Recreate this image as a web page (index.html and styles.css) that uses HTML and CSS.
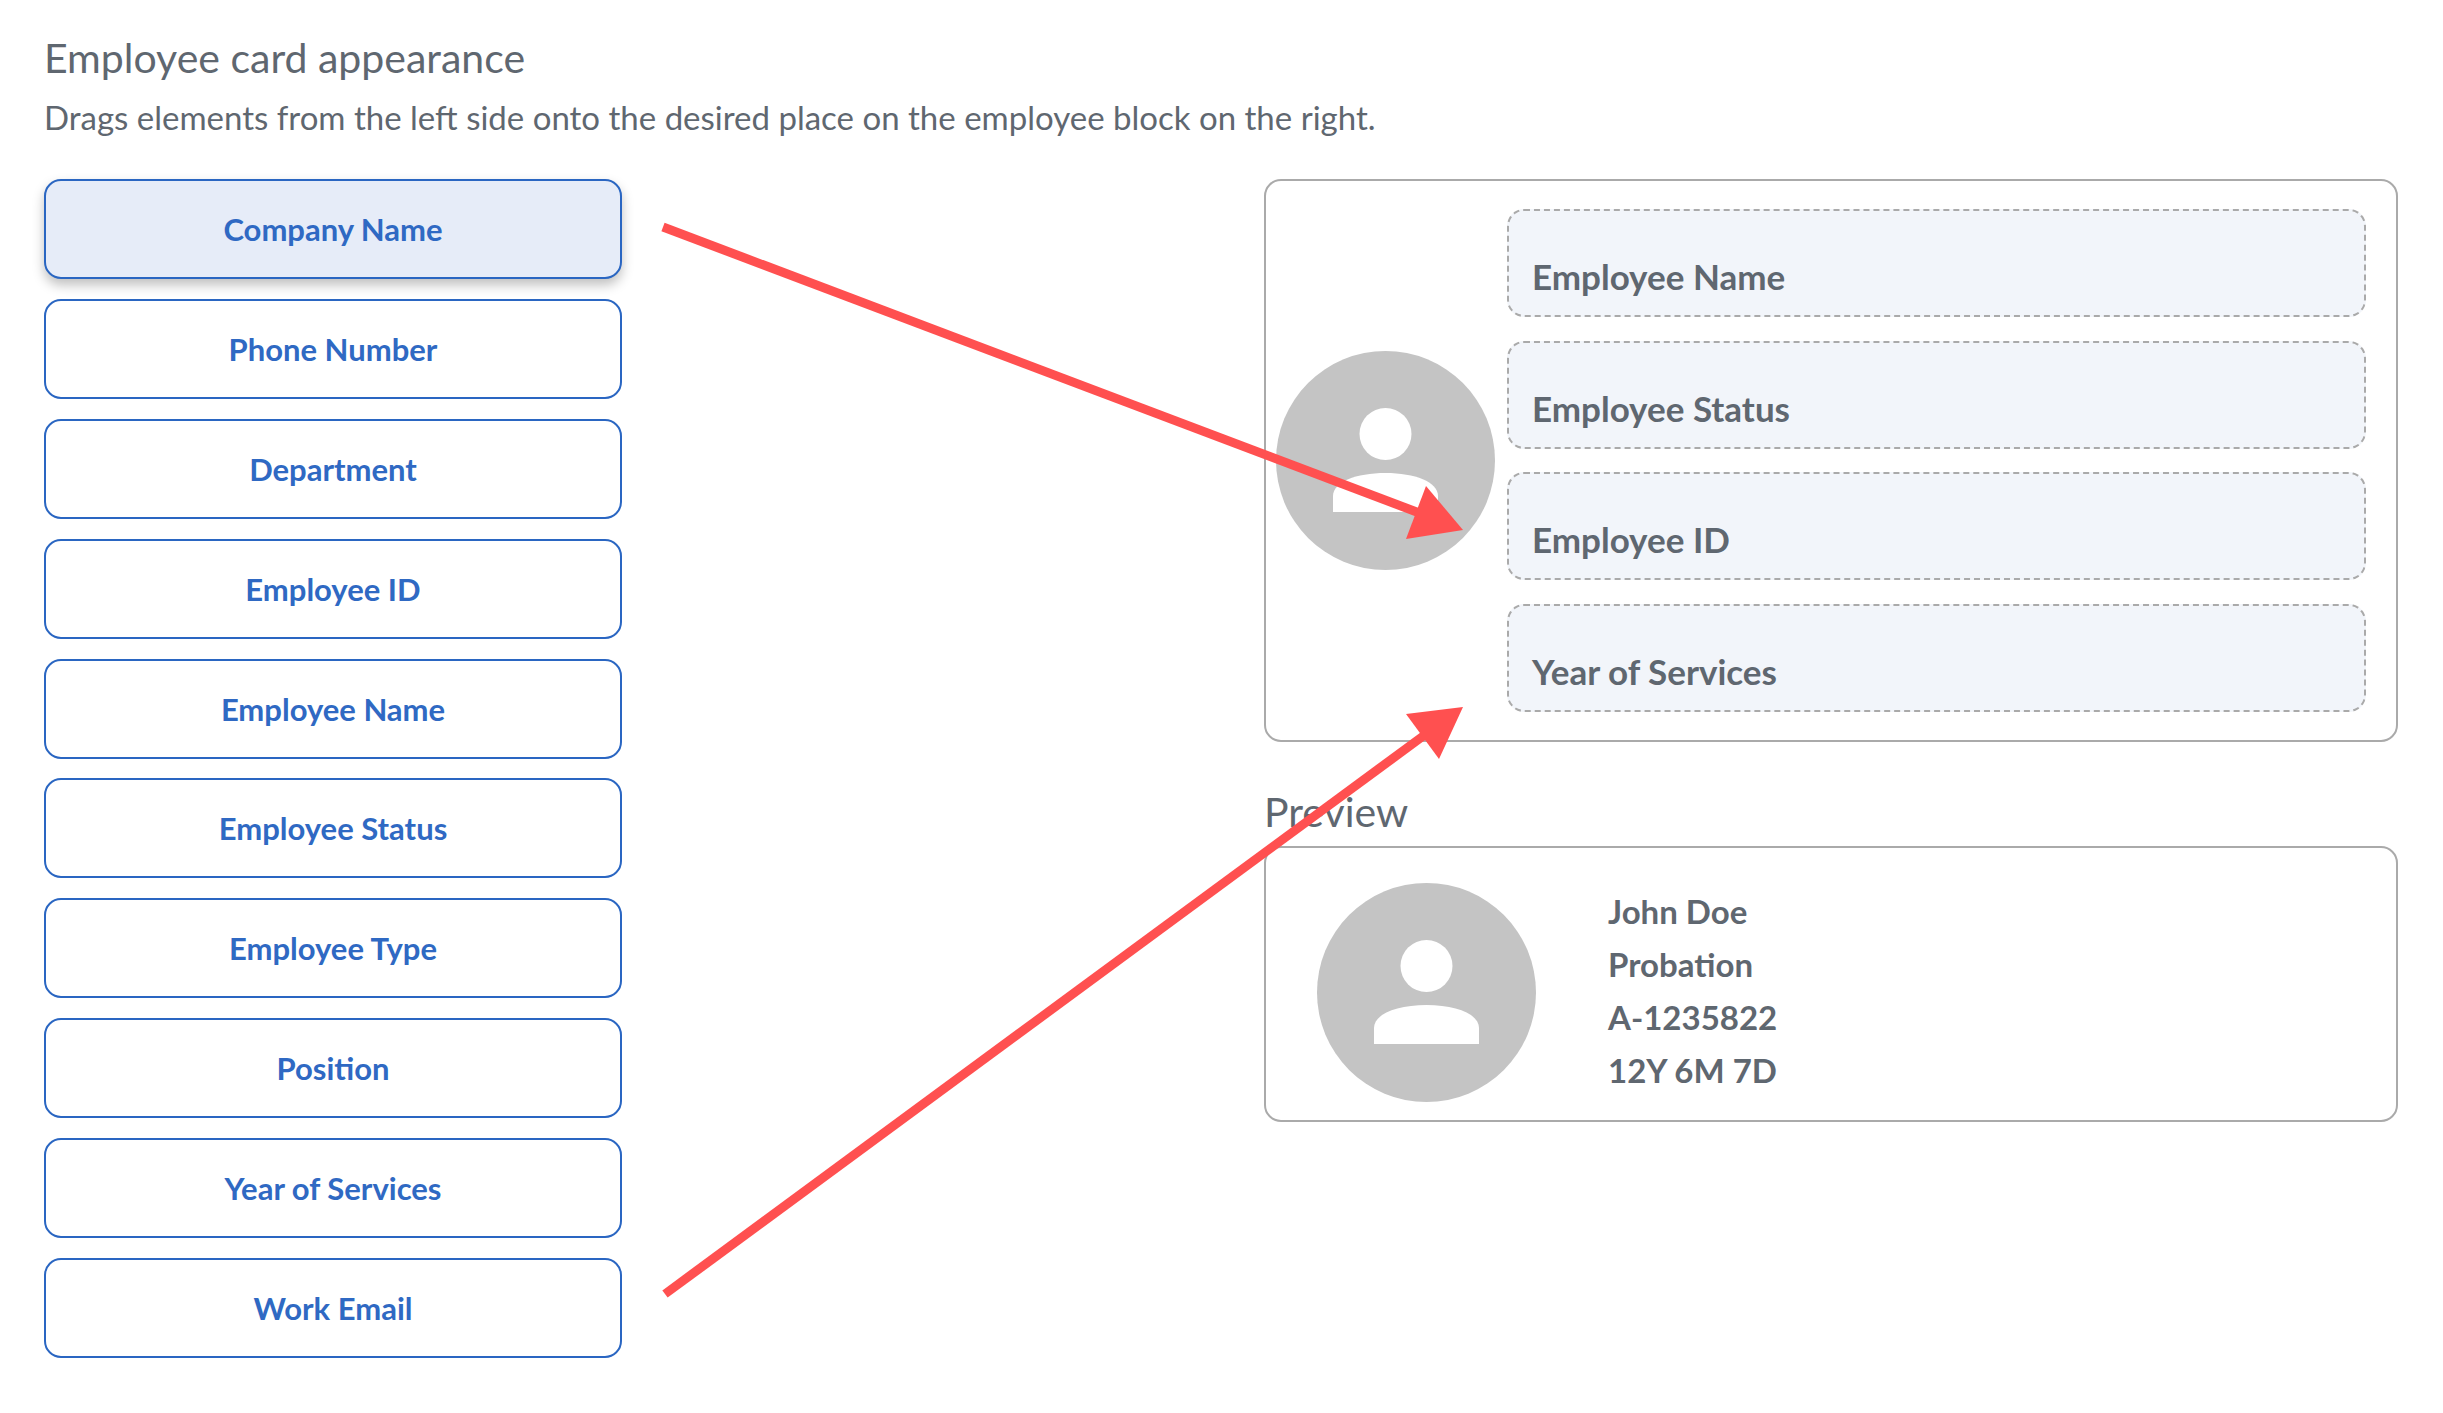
FILE: index.html
```html
<!DOCTYPE html>
<html lang="en">
<head>
    <meta charset="UTF-8">
    <meta name="viewport" content="width=device-width, initial-scale=1.0">
    <title>Employee card appearance</title>
    <link rel="stylesheet" href="styles.css">
</head>
<body>
    <div class="page">
        <h1 class="title">Employee card appearance</h1>
        <p class="subtitle">Drags elements from the left side onto the desired place on the employee block on the right.</p>

        <div class="builder">
            <div class="fields">
                <button class="field field-active">Company Name</button>
                <button class="field">Phone Number</button>
                <button class="field">Department</button>
                <button class="field">Employee ID</button>
                <button class="field">Employee Name</button>
                <button class="field">Employee Status</button>
                <button class="field">Employee Type</button>
                <button class="field">Position</button>
                <button class="field">Year of Services</button>
                <button class="field">Work Email</button>
            </div>

            <div class="cards">
                <div class="card card-edit">
                    <svg class="avatar" viewBox="0 0 219 219">
                        <circle cx="109.5" cy="109.5" r="109.5" fill="#c4c4c4"/>
                        <circle cx="109.5" cy="83" r="26" fill="#fff"/>
                        <path d="M57 161V145C57 131 80 122 109.5 122S162 131 162 145V161Z" fill="#fff"/>
                    </svg>
                    <div class="slots">
                        <div class="slot">Employee Name</div>
                        <div class="slot">Employee Status</div>
                        <div class="slot">Employee ID</div>
                        <div class="slot">Year of Services</div>
                    </div>
                </div>

                <h2 class="preview-title">Preview</h2>
                <div class="card card-preview">
                    <svg class="avatar" viewBox="0 0 219 219">
                        <circle cx="109.5" cy="109.5" r="109.5" fill="#c4c4c4"/>
                        <circle cx="109.5" cy="83" r="26" fill="#fff"/>
                        <path d="M57 161V145C57 131 80 122 109.5 122S162 131 162 145V161Z" fill="#fff"/>
                    </svg>
                    <div class="preview-text">
                        <div>John Doe</div>
                        <div>Probation</div>
                        <div>A-1235822</div>
                        <div>12Y 6M 7D</div>
                    </div>
                </div>
            </div>
        </div>
    </div>

    <!-- annotation arrows drawn over the screenshot -->
    <svg class="arrows" viewBox="0 0 2443 1413">
        <line x1="663" y1="227" x2="1430" y2="517" stroke="#ff5050" stroke-width="9"/>
        <polygon points="1463,530 1426,486 1406,539" fill="#ff5050"/>
        <line x1="665" y1="1294" x2="1430" y2="731" stroke="#ff5050" stroke-width="9"/>
        <polygon points="1463,707 1406,714 1439,759" fill="#ff5050"/>
    </svg>
</body>
</html>
```

FILE: styles.css
```css
* {
    box-sizing: border-box;
}

body {
    margin: 0;
    padding: 0;
    font-family: Lato, 'Open Sans', sans-serif;
    background: #fff;
    color: #5f6770;
}

.page {
    padding: 34px 45px 0 44px;
}

.title {
    margin: 0;
    font-size: 41px;
    line-height: 48px;
    font-weight: 400;
}

.subtitle {
    margin: 13px 0 0;
    font-size: 33px;
    line-height: 44px;
}

.builder {
    display: flex;
    justify-content: space-between;
    margin-top: 40px;
}

.fields {
    width: 578px;
    display: flex;
    flex-direction: column;
    gap: 19.9px;
}

.field {
    height: 100px;
    border: 2px solid #2a66c2;
    border-radius: 17px;
    background: #fff;
    color: #2f69c3;
    font-family: inherit;
    font-size: 31px;
    font-weight: 700;
    cursor: pointer;
}

.field-active {
    background: #e6ecf8;
    box-shadow: 0 6px 12px rgba(0,0,0,0.25);
}

.cards {
    width: 1134px;
}

.card {
    border: 2px solid #aaa;
    border-radius: 17px;
    display: flex;
}

.card-edit {
    align-items: center;
    padding: 28px 30px 28px 10px;
}

.avatar {
    width: 219px;
    height: 219px;
    flex-shrink: 0;
}

.slots {
    flex: 1;
    margin-left: 12px;
    display: flex;
    flex-direction: column;
    gap: 23.5px;
}

.slot {
    height: 108px;
    border: 2px dashed #aaa;
    border-radius: 17px;
    background: #f2f5fa;
    padding: 0 0 19px 23px;
    display: flex;
    align-items: flex-end;
    font-size: 35px;
    line-height: 40px;
    font-weight: 700;
}

.preview-title {
    margin: 46px 0 0;
    font-size: 41px;
    line-height: 48px;
    font-weight: 400;
}

.card-preview {
    height: 276px;
    margin-top: 10px;
    padding: 35px 0 0 51px;
}

.preview-text {
    margin: 2px 0 0 72px;
    font-size: 33px;
    line-height: 53.3px;
    font-weight: 700;
}

.arrows {
    position: absolute;
    top: 0;
    left: 0;
    width: 2443px;
    height: 1413px;
    pointer-events: none;
}
```
